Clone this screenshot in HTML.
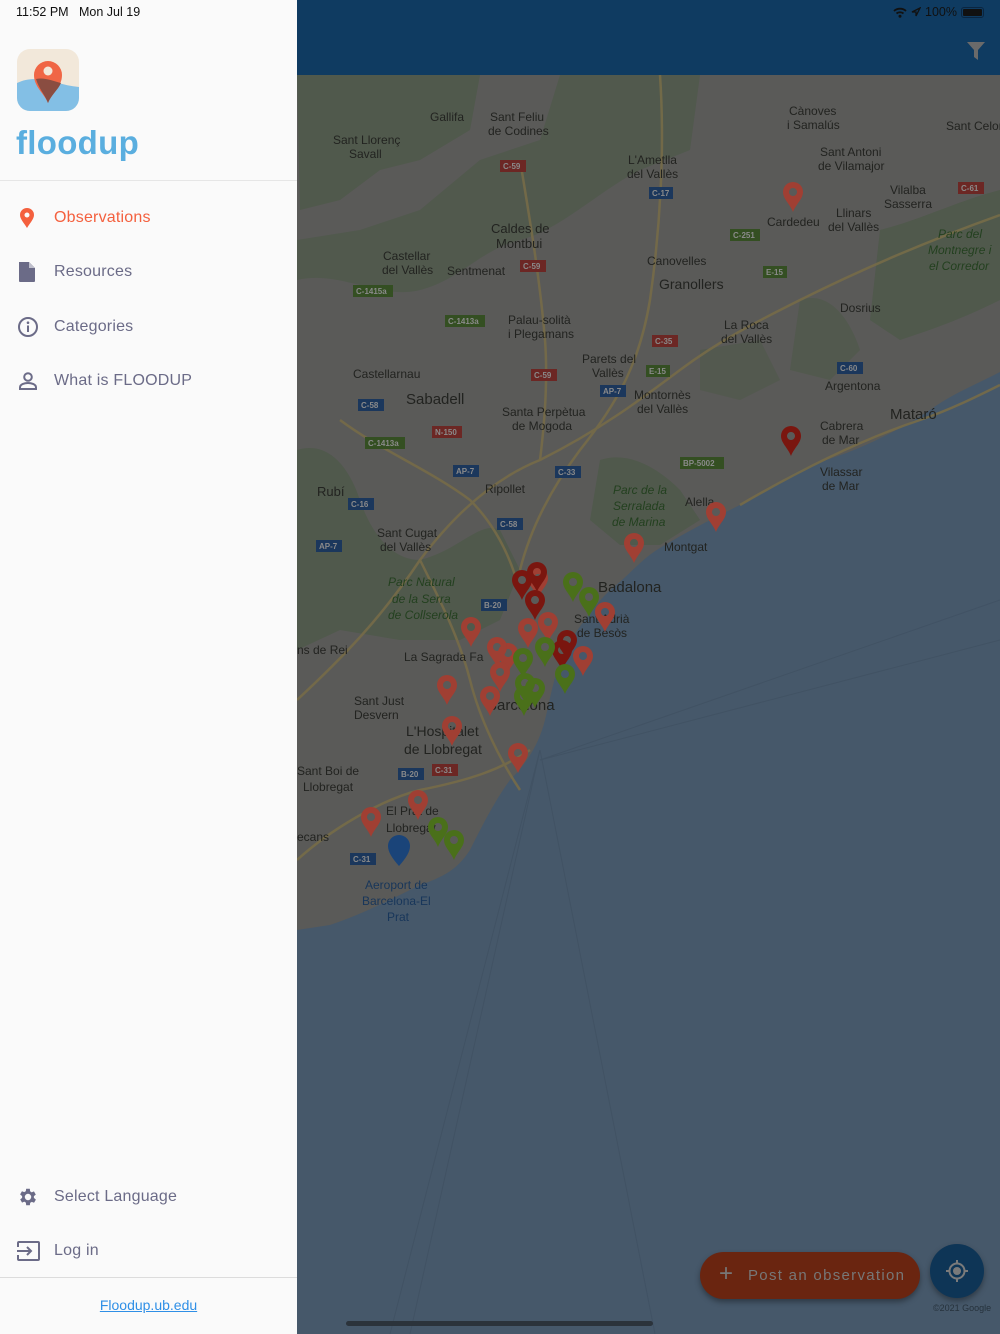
<!DOCTYPE html>
<html><head><meta charset="utf-8">
<style>
*{margin:0;padding:0;box-sizing:border-box}
body{width:1000px;height:1334px;overflow:hidden;font-family:"Liberation Sans",sans-serif;background:#46586a;position:relative}
#map{position:absolute;left:0;top:0;width:1000px;height:1334px}
#hdr{position:absolute;left:297px;top:0;width:703px;height:75px;background:#0f3b61}
#drawer{position:absolute;left:0;top:0;width:297px;height:1334px;background:#fafafa}
.st{position:absolute;top:5px;font-size:12.5px;color:#111}
.item{position:absolute;left:0;width:297px;height:54px;display:flex;align-items:center;font-size:16px;color:#6b6b87;letter-spacing:.2px}
.item svg{position:absolute;left:17px}
.item span{position:absolute;left:54px}
</style></head><body>
<svg id="map" viewBox="0 0 1000 1334">
<defs>
<path id="pin" d="M0,0 C-3,-8 -10,-13 -10,-20 A10,10 0 1 1 10,-20 C10,-13 3,-8 0,0 Z M0,-24 a4,4 0 1 0 0.01,0 Z" fill-rule="evenodd"/>
</defs>
<rect width="1000" height="1334" fill="#46586a"/>
<path d="M297,75 H1000 V372 C975,385 950,395 930,410 C900,430 860,450 820,462 C790,472 770,490 740,505 C710,520 690,530 660,548 C640,560 630,575 610,590 C595,605 580,625 565,650 C555,670 550,700 545,720 C540,740 530,760 510,780 C495,800 480,830 470,850 C460,865 450,875 420,885 C390,900 360,915 330,925 L297,930 Z" fill="#5a5a58"/>
<g fill="#50594c">
<path d="M297,75 H480 L470,130 L420,160 L380,170 L340,200 L300,210 Z"/>
<path d="M297,280 C340,270 380,300 420,290 C460,280 480,250 520,240 C560,230 600,190 640,170 L690,150 L700,75 H560 L540,140 L480,160 L420,210 L360,230 L297,240 Z" opacity=".9"/>
<path d="M297,450 C330,440 350,470 360,500 C370,530 390,560 420,560 C460,550 480,520 500,530 L520,570 L500,620 L460,640 L400,640 L340,630 L297,650 Z"/>
<path d="M600,460 C630,450 660,470 680,490 L700,520 L660,545 L620,545 L590,520 Z"/>
<path d="M880,230 C920,220 960,200 1000,190 V300 C960,320 930,330 900,340 L870,320 Z"/>
<path d="M800,300 C830,290 850,320 860,350 L830,380 L790,370 Z" opacity=".8"/>
<path d="M700,350 L760,340 L780,380 L740,400 L700,390 Z" opacity=".7"/>
</g>
<g fill="none" stroke="#766b48" stroke-width="2.5" opacity=".9">
<path d="M297,700 C340,660 380,620 420,560 C450,520 490,480 540,460 C600,430 640,400 680,370 C720,340 760,320 800,300 C860,270 930,240 1000,215"/>
<path d="M660,75 C665,150 660,230 650,300 C640,360 620,400 580,450 C550,490 530,530 520,570"/>
<path d="M340,420 C380,450 430,470 470,500 C490,520 505,545 515,575"/>
<path d="M420,560 C440,600 460,640 470,680 C480,720 500,760 520,790"/>
<path d="M297,860 C330,830 380,800 420,790 C470,780 500,770 530,750"/>
<path d="M740,505 C800,470 860,440 920,420 C950,410 980,395 1000,385"/>
<path d="M520,160 C530,220 540,280 545,340 C548,380 545,420 540,460"/>
</g>
<g font-size="12" fill="#222320" font-family="Liberation Sans,sans-serif">
<text x="430" y="121">Gallifa</text><text x="490" y="121">Sant Feliu</text><text x="488" y="135">de Codines</text>
<text x="333" y="144">Sant Llorenç</text><text x="349" y="158">Savall</text>
<text x="628" y="164">L'Ametlla</text><text x="627" y="178">del Vallès</text>
<text x="789" y="115">Cànoves</text><text x="787" y="129">i Samalús</text><text x="946" y="130">Sant Celon</text>
<text x="820" y="156">Sant Antoni</text><text x="818" y="170">de Vilamajor</text>
<text x="767" y="226">Cardedeu</text><text x="836" y="217">Llinars</text><text x="828" y="231">del Vallès</text>
<text x="890" y="194">Vilalba</text><text x="884" y="208">Sasserra</text>
<text x="491" y="233" font-size="13">Caldes de</text><text x="496" y="248" font-size="13">Montbui</text>
<text x="383" y="260">Castellar</text><text x="382" y="274">del Vallès</text><text x="447" y="275">Sentmenat</text>
<text x="647" y="265">Canovelles</text><text x="659" y="289" font-size="14">Granollers</text>
<text x="508" y="324">Palau-solità</text><text x="508" y="338">i Plegamans</text>
<text x="724" y="329">La Roca</text><text x="721" y="343">del Vallès</text><text x="840" y="312">Dosrius</text>
<text x="582" y="363">Parets del</text><text x="592" y="377">Vallès</text>
<text x="353" y="378">Castellarnau</text><text x="406" y="404" font-size="15">Sabadell</text>
<text x="825" y="390">Argentona</text><text x="890" y="419" font-size="15">Mataró</text>
<text x="634" y="399">Montornès</text><text x="637" y="413">del Vallès</text>
<text x="502" y="416">Santa Perpètua</text><text x="512" y="430">de Mogoda</text>
<text x="820" y="430">Cabrera</text><text x="822" y="444">de Mar</text>
<text x="820" y="476">Vilassar</text><text x="822" y="490">de Mar</text>
<text x="485" y="493">Ripollet</text><text x="317" y="496" font-size="13">Rubí</text><text x="685" y="506">Alella</text>
<text x="377" y="537">Sant Cugat</text><text x="380" y="551">del Vallès</text><text x="664" y="551">Montgat</text>
<text x="598" y="592" font-size="15">Badalona</text>
<text x="297" y="654">ns de Rei</text><text x="404" y="661">La Sagrada Fa</text>
<text x="574" y="623">Sant Adrià</text><text x="577" y="637">de Besòs</text>
<text x="354" y="705">Sant Just</text><text x="354" y="719">Desvern</text>
<text x="487" y="710" font-size="15">Barcelona</text>
<text x="406" y="736" font-size="14">L'Hospitalet</text><text x="404" y="754" font-size="14">de Llobregat</text>
<text x="297" y="775">Sant Boi de</text><text x="303" y="791">Llobregat</text>
<text x="386" y="815">El Prat de</text><text x="386" y="832">Llobregat</text><text x="297" y="841">ecans</text>
</g>
<g font-size="12" font-style="italic" fill="#23401f"><text x="388" y="586">Parc Natural</text><text x="392" y="603">de la Serra</text><text x="388" y="619">de Collserola</text>
<text x="613" y="494">Parc de la</text><text x="613" y="510">Serralada</text><text x="612" y="526">de Marina</text>
<text x="938" y="238">Parc del</text><text x="928" y="254">Montnegre i</text><text x="929" y="270">el Corredor</text></g>
<g font-size="12" fill="#18365a"><text x="365" y="889">Aeroport de</text><text x="362" y="905">Barcelona-El</text><text x="387" y="921">Prat</text></g>
<g font-size="8" font-weight="bold" fill="#8a8a8a">
<rect x="500" y="160" width="26" height="12" fill="#6c2724"/><text x="503" y="169">C-59</text>
<rect x="649" y="187" width="24" height="12" fill="#1b375c"/><text x="652" y="196">C-17</text>
<rect x="730" y="229" width="30" height="12" fill="#344f22"/><text x="733" y="238">C-251</text>
<rect x="763" y="266" width="24" height="12" fill="#344f22"/><text x="766" y="275">E-15</text>
<rect x="520" y="260" width="26" height="12" fill="#6c2724"/><text x="523" y="269">C-59</text>
<rect x="353" y="285" width="40" height="12" fill="#344f22"/><text x="356" y="294">C-1415a</text>
<rect x="445" y="315" width="40" height="12" fill="#344f22"/><text x="448" y="324">C-1413a</text>
<rect x="652" y="335" width="26" height="12" fill="#6c2724"/><text x="655" y="344">C-35</text>
<rect x="646" y="365" width="24" height="12" fill="#344f22"/><text x="649" y="374">E-15</text>
<rect x="531" y="369" width="26" height="12" fill="#6c2724"/><text x="534" y="378">C-59</text>
<rect x="600" y="385" width="26" height="12" fill="#1b375c"/><text x="603" y="394">AP-7</text>
<rect x="837" y="362" width="26" height="12" fill="#1b375c"/><text x="840" y="371">C-60</text>
<rect x="358" y="399" width="26" height="12" fill="#1b375c"/><text x="361" y="408">C-58</text>
<rect x="432" y="426" width="30" height="12" fill="#6c2724"/><text x="435" y="435">N-150</text>
<rect x="365" y="437" width="40" height="12" fill="#344f22"/><text x="368" y="446">C-1413a</text>
<rect x="453" y="465" width="26" height="12" fill="#1b375c"/><text x="456" y="474">AP-7</text>
<rect x="555" y="466" width="26" height="12" fill="#1b375c"/><text x="558" y="475">C-33</text>
<rect x="680" y="457" width="44" height="12" fill="#344f22"/><text x="683" y="466">BP-5002</text>
<rect x="348" y="498" width="26" height="12" fill="#1b375c"/><text x="351" y="507">C-16</text>
<rect x="497" y="518" width="26" height="12" fill="#1b375c"/><text x="500" y="527">C-58</text>
<rect x="316" y="540" width="26" height="12" fill="#1b375c"/><text x="319" y="549">AP-7</text>
<rect x="481" y="599" width="26" height="12" fill="#1b375c"/><text x="484" y="608">B-20</text>
<rect x="398" y="768" width="26" height="12" fill="#1b375c"/><text x="401" y="777">B-20</text>
<rect x="432" y="764" width="26" height="12" fill="#6c2724"/><text x="435" y="773">C-31</text>
<rect x="350" y="853" width="26" height="12" fill="#1b375c"/><text x="353" y="862">C-31</text>
<rect x="958" y="182" width="26" height="12" fill="#6c2724"/><text x="961" y="191">C-61</text>
</g>
<path d="M399,866 C392,858 388,852 388,846 A11,11 0 1 1 410,846 C410,852 406,858 399,866Z" fill="#1a4479"/>
<g stroke="#3e4f60" stroke-width="1" fill="none" opacity=".6">
<path d="M540,750 L390,1334"/><path d="M540,750 L410,1334"/><path d="M540,750 L655,1334"/>
<path d="M540,760 L1000,640"/><path d="M540,760 L1000,600"/>
</g>
<g fill="#a03f33">
<use href="#pin" x="793" y="212"/><use href="#pin" x="716" y="532"/><use href="#pin" x="634" y="563"/>
<use href="#pin" x="605" y="632"/><use href="#pin" x="471" y="647"/><use href="#pin" x="528" y="648"/>
<use href="#pin" x="548" y="642"/><use href="#pin" x="583" y="676"/><use href="#pin" x="508" y="673"/>
<use href="#pin" x="497" y="667"/><use href="#pin" x="500" y="692"/><use href="#pin" x="447" y="705"/>
<use href="#pin" x="490" y="716"/><use href="#pin" x="452" y="746"/><use href="#pin" x="518" y="773"/>
<use href="#pin" x="418" y="820"/><use href="#pin" x="371" y="837"/><use href="#pin" x="538" y="598"/>
</g>
<g fill="#7a160f">
<use href="#pin" x="791" y="456"/><use href="#pin" x="537" y="592"/><use href="#pin" x="522" y="600"/>
<use href="#pin" x="535" y="620"/><use href="#pin" x="567" y="660"/><use href="#pin" x="562" y="670"/>
</g>
<g fill="#4a701a">
<use href="#pin" x="573" y="602"/><use href="#pin" x="589" y="617"/><use href="#pin" x="545" y="667"/>
<use href="#pin" x="523" y="678"/><use href="#pin" x="565" y="694"/><use href="#pin" x="525" y="703"/>
<use href="#pin" x="535" y="708"/><use href="#pin" x="524" y="716"/><use href="#pin" x="438" y="847"/>
<use href="#pin" x="454" y="860"/>
</g>
</svg>
<div id="hdr"></div>
<div style="position:absolute;right:16px;top:5px;font-size:12.5px;color:#111;display:flex;align-items:center;gap:4px;white-space:nowrap">
<svg width="14" height="11" viewBox="0 0 14 11"><path d="M1,4 A9,9 0 0 1 13,4 M3.5,6.5 A5.5,5.5 0 0 1 10.5,6.5" stroke="#111" stroke-width="1.8" fill="none"/><circle cx="7" cy="9.3" r="1.5" fill="#111"/></svg>
<svg width="10" height="10" viewBox="0 0 10 10"><path d="M9,1 L1,5 L5,5 L5,9 Z" fill="none" stroke="#111" stroke-width="1.3"/></svg>
<span>100%</span>
<div style="width:23px;height:11px;border:1px solid #0a2540;border-radius:3px;padding:1px"><div style="width:100%;height:100%;background:#111;border-radius:1px"></div></div></div>
<svg style="position:absolute;left:966px;top:41px" width="20" height="20" viewBox="0 0 20 20"><path d="M1,1 H19 L12,9 V19 L8,16 V9 Z" fill="#6a6a6a"/></svg>
<div style="position:absolute;left:700px;top:1252px;width:220px;height:47px;background:#6a2510;border-radius:24px;box-shadow:0 3px 6px rgba(0,0,0,.35);color:#777;font-size:15px;letter-spacing:1.3px;display:flex;align-items:center">
<span style="position:absolute;left:19px;top:8px;font-size:24px;font-weight:300">+</span><span style="position:absolute;left:48px">Post an observation</span></div>
<div style="position:absolute;left:930px;top:1244px;width:54px;height:54px;border-radius:50%;background:#0e3556;box-shadow:0 3px 6px rgba(0,0,0,.35)">
<svg width="54" height="54" viewBox="0 0 54 54"><circle cx="27" cy="27" r="7.5" fill="none" stroke="#7a7a7a" stroke-width="2"/><circle cx="27" cy="27" r="4" fill="#7a7a7a"/><path d="M27,16 V20 M27,34 V38 M16,27 H20 M34,27 H38" stroke="#7a7a7a" stroke-width="2"/></svg></div>
<div style="position:absolute;left:933px;top:1303px;font-size:9px;color:#26323c">©2021 Google</div>
<div style="position:absolute;left:346px;top:1321px;width:307px;height:5px;border-radius:3px;background:#2b333b"></div>
<div id="drawer">
<div class="st" style="left:16px">11:52 PM&nbsp;&nbsp;&nbsp;Mon Jul 19</div>
<svg style="position:absolute;left:17px;top:49px" width="62" height="62" viewBox="0 0 62 62">
<defs><clipPath id="c"><rect width="62" height="62" rx="13"/></clipPath></defs>
<g clip-path="url(#c)"><rect width="62" height="62" fill="#f2e8da"/><path d="M0,34 C20,24 40,36 62,38 V62 H0 Z" fill="#83bfe5"/></g>
<path d="M31,54 C27,44 17,38 17,26 A14,14 0 1 1 45,26 C45,38 35,44 31,54 Z" fill="#f06645"/>
<path d="M19,30 C27,28 36,32 44,34 C41,41 34,46 31,54 C28,46 22,40 19,30 Z" fill="#8a4d41"/>
<circle cx="31" cy="22" r="4.5" fill="#f2e8da"/></svg>
<div style="position:absolute;left:16px;top:124px;font-size:33px;font-weight:bold;color:#5aaedf;letter-spacing:.3px">floodup</div>
<div style="position:absolute;left:0;top:180px;width:297px;height:1px;background:#e6e6e6"></div>
<div class="item" style="top:191px;color:#f4603e"><svg width="20" height="22" viewBox="0 0 20 22"><path d="M10,21 C7,16 3,12 3,8 A7,7 0 1 1 17,8 C17,12 13,16 10,21Z M10,5.5 a2.5,2.5 0 1 0 .01,0Z" fill="#f4603e" fill-rule="evenodd"/></svg><span>Observations</span></div>
<div class="item" style="top:245px"><svg width="20" height="22" viewBox="0 0 20 22"><path d="M2,1 H12 L18,7 V20 a1,1 0 0 1 -1,1 H3 a1,1 0 0 1 -1,-1 Z" fill="#6b6b87"/><path d="M12,1 V7 H18" fill="#bfbfcc"/></svg><span>Resources</span></div>
<div class="item" style="top:300px"><svg width="22" height="22" viewBox="0 0 22 22"><circle cx="11" cy="11" r="9" fill="none" stroke="#6b6b87" stroke-width="2"/><circle cx="11" cy="6.7" r="1.3" fill="#6b6b87"/><path d="M11,9.5 V16" stroke="#6b6b87" stroke-width="2"/></svg><span>Categories</span></div>
<div class="item" style="top:354px"><svg width="22" height="22" viewBox="0 0 22 22"><circle cx="11" cy="7" r="3.8" fill="none" stroke="#6b6b87" stroke-width="2"/><path d="M3,19 V17.5 C3,14 8,13 11,13 C14,13 19,14 19,17.5 V19 Z" fill="none" stroke="#6b6b87" stroke-width="2"/></svg><span>What is FLOODUP</span></div>
<div class="item" style="top:1170px"><svg width="22" height="22" viewBox="0 0 24 24"><path fill="#6b6b87" d="M19.4 13a7.5 7.5 0 0 0 0-2l2.1-1.6-2-3.5-2.5 1a7 7 0 0 0-1.7-1L15 3h-4l-.4 2.7a7 7 0 0 0-1.7 1l-2.5-1-2 3.5L6.6 11a7.5 7.5 0 0 0 0 2l-2.1 1.6 2 3.5 2.5-1a7 7 0 0 0 1.7 1L11 21h4l.4-2.7a7 7 0 0 0 1.7-1l2.5 1 2-3.5zM13 15.5a3.5 3.5 0 1 1 0-7 3.5 3.5 0 0 1 0 7z" transform="translate(-1,0)"/></svg><span>Select Language</span></div>
<div class="item" style="top:1224px"><svg width="23" height="20" viewBox="0 0 23 20"><path d="M1,6 V2 a1,1 0 0 1 1,-1 H21 a1,1 0 0 1 1,1 V18 a1,1 0 0 1 -1,1 H2 a1,1 0 0 1 -1,-1 V14" fill="none" stroke="#6b6b87" stroke-width="2"/><path d="M0,10 H14 M10,6 L14,10 L10,14" fill="none" stroke="#6b6b87" stroke-width="2"/></svg><span>Log in</span></div>
<div style="position:absolute;left:0;top:1277px;width:297px;height:1px;background:#dcdcdc"></div>
<div style="position:absolute;left:0;top:1297px;width:297px;text-align:center;font-size:14px;color:#2f8fe6;text-decoration:underline">Floodup.ub.edu</div>
</div>
</body></html>
